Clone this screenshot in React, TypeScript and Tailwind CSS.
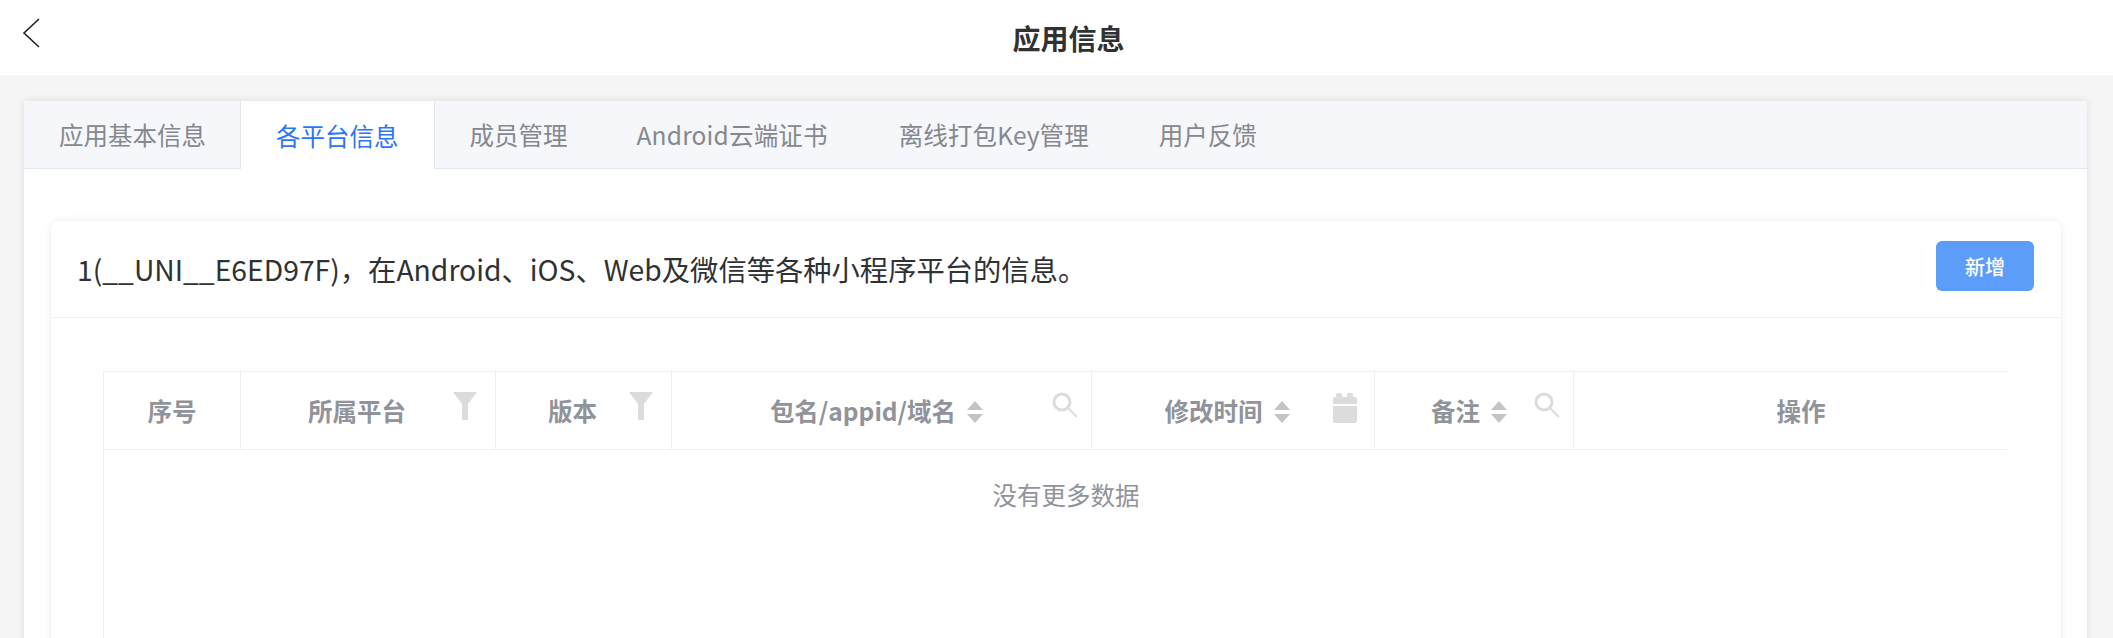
function Funnel() {
  return (
    <svg width="24" height="28" viewBox="0 0 24 28" className="absolute top-[20px] right-[18px]">
      <path d="M0 0h24L15 12v16H9V12z" fill="#dcdcdc" />
    </svg>
  );
}

function Search() {
  return (
    <svg width="26" height="26" viewBox="0 0 26 26" className="absolute top-[20px] right-[13px]" fill="none" stroke="#dcdcdc">
      <circle cx="10" cy="10" r="8" strokeWidth="3" />
      <path d="M16 16l9 9" strokeWidth="2" />
    </svg>
  );
}

function Calendar() {
  return (
    <svg width="24" height="30" viewBox="0 0 24 30" className="absolute top-[21px] right-[17px]" fill="#dcdcdc">
      <rect x="3" y="0" width="6" height="6" rx="1.5" />
      <rect x="14" y="0" width="6" height="6" rx="1.5" />
      <path d="M2 4h20a2 2 0 0 1 2 2v5H0V6a2 2 0 0 1 2-2z" />
      <path d="M0 13h24v15a2 2 0 0 1-2 2H2a2 2 0 0 1-2-2z" />
    </svg>
  );
}

function Sort() {
  return (
    <svg width="16" height="22" viewBox="0 0 16 22" className="ml-[11px] shrink-0">
      <path d="M8 0l8 9H0z" fill="#c4c4c4" />
      <path d="M8 22l8-9H0z" fill="#c4c4c4" />
    </svg>
  );
}

const tabs = [
  { label: "应用基本信息", style: "pr-[34px] pl-[35px]" },
  { label: "各平台信息", style: "px-[35px]" },
  { label: "成员管理", style: "px-[35px]" },
  { label: "Android云端证书", style: "pr-[36px] pl-[34px] tracking-[0.2px]" },
  { label: "离线打包Key管理", style: "px-[35px] tracking-[0.1px]" },
  { label: "用户反馈", style: "px-[35px]" },
];

const columns = [
  { title: "序号", width: "w-[137px]", pad: "" },
  { title: "所属平台", width: "w-[255px]", pad: "pr-[22px]", icon: <Funnel /> },
  { title: "版本", width: "w-[176px]", pad: "pr-[22px]", icon: <Funnel /> },
  { title: "包名/appid/域名", width: "w-[420px]", pad: "pr-[10px]", sort: true, icon: <Search /> },
  { title: "修改时间", width: "w-[283px]", pad: "pr-[12px]", sort: true, icon: <Calendar /> },
  { title: "备注", width: "w-[199px]", pad: "pr-[10px]", sort: true, icon: <Search /> },
  { title: "操作", width: "w-[454px]", pad: "" },
];

export default function App() {
  return (
    <div className="h-[638px] overflow-hidden bg-[#f5f5f5] font-['Noto_Sans_CJK_SC',sans-serif]">
      <header className="relative flex h-[75px] items-center justify-center bg-white pl-6">
        <svg width="18" height="30" viewBox="0 0 18 30" fill="none" stroke="#222" strokeWidth="1.6" className="absolute top-[18px] left-[22px]">
          <path d="M17 1L2 15l15 14" />
        </svg>
        <h1 className="text-[28px] font-bold text-[#303133]">应用信息</h1>
      </header>

      <main className="pt-[26px] pr-[26px] pl-6">
        <div className="bg-white shadow-[0_0_8px_rgba(0,0,0,0.1)]">
          <nav className="flex h-[68px] border-b border-[#e4e7ed] bg-[#f5f7fa]">
            {tabs.map((tab, i) => (
              <div
                key={tab.label}
                className={
                  i === 1
                    ? `-mb-px flex h-[68px] items-center border-x border-[#e4e7ed] bg-white pt-0.5 text-[24.5px] text-[#2b75f6] ${tab.style}`
                    : `flex items-center pt-0.5 text-[24.5px] text-[#85888e] ${tab.style}`
                }
              >
                {tab.label}
              </div>
            ))}
          </nav>

          <div className="pt-[52px] pr-[26px] pl-[27px]">
            <div className="rounded-lg bg-white shadow-[0_0_8px_rgba(0,0,0,0.08)]">
              <div className="flex h-[97px] justify-between border-b border-[#f0f0f0] pt-5 pr-[27px] pl-[26px]">
                <span className="pt-[6px] text-[28.3px] leading-[44px] text-[#303133]">1(__UNI__E6ED97F)，在Android、iOS、Web及微信等各种小程序平台的信息。</span>
                <button className="h-[50px] w-[98px] rounded-md bg-[#5c9dfa] pt-px text-xl font-medium text-white">新增</button>
              </div>

              <div className="h-[400px] pt-[53px] pr-[54px] pl-[52px]">
                <div className="h-full overflow-hidden border-l border-[#ebeef5]">
                  <div className="w-[1924px]">
                    <div className="flex h-[79px] border-y border-[#ebeef5]">
                      {columns.map((col, i) => (
                        <div
                          key={col.title}
                          className={`relative flex items-center justify-center pt-0.5 text-[24.5px] font-bold text-[#909399] ${col.width} ${col.pad} ${i < columns.length - 1 ? "border-r border-[#ebeef5]" : ""}`}
                        >
                          {col.title}
                          {col.sort && <Sort />}
                          {col.icon}
                        </div>
                      ))}
                    </div>
                    <p className="pt-[27px] text-center text-[24.5px] text-[#909399]">没有更多数据</p>
                  </div>
                </div>
              </div>
            </div>
          </div>
        </div>
      </main>
    </div>
  );
}
